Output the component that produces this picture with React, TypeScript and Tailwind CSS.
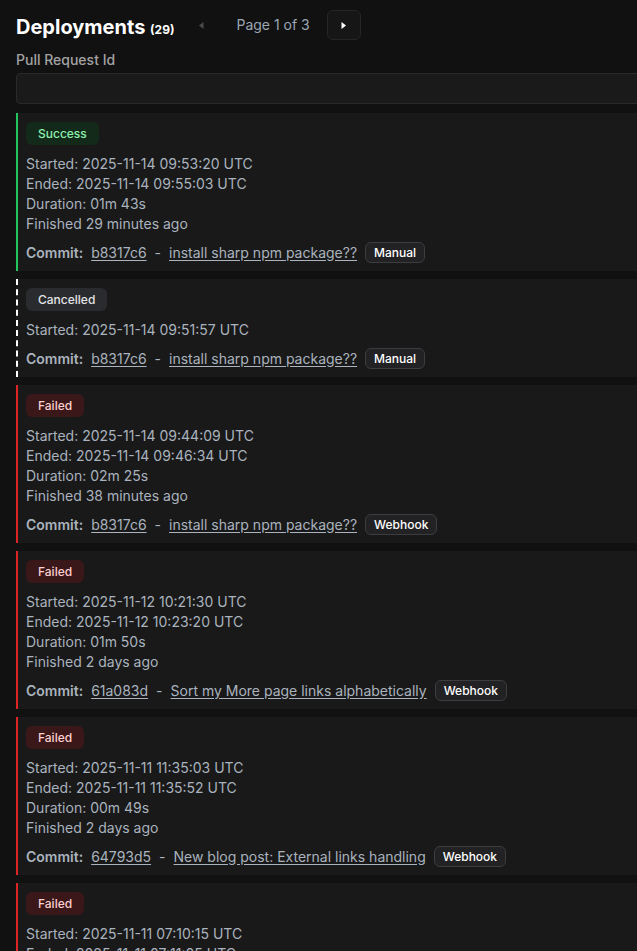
import React from 'react';

type Status = 'Success' | 'Cancelled' | 'Failed';

interface Deployment {
  status: Status;
  started: string;
  ended?: string;
  duration?: string;
  finished?: string;
  sha: string;
  message: string;
  trigger: string;
}

const deployments: Deployment[] = [
  {
    status: 'Success',
    started: '2025-11-14 09:53:20 UTC',
    ended: '2025-11-14 09:55:03 UTC',
    duration: '01m 43s',
    finished: '29 minutes ago',
    sha: 'b8317c6',
    message: 'install sharp npm package??',
    trigger: 'Manual',
  },
  {
    status: 'Cancelled',
    started: '2025-11-14 09:51:57 UTC',
    sha: 'b8317c6',
    message: 'install sharp npm package??',
    trigger: 'Manual',
  },
  {
    status: 'Failed',
    started: '2025-11-14 09:44:09 UTC',
    ended: '2025-11-14 09:46:34 UTC',
    duration: '02m 25s',
    finished: '38 minutes ago',
    sha: 'b8317c6',
    message: 'install sharp npm package??',
    trigger: 'Webhook',
  },
  {
    status: 'Failed',
    started: '2025-11-12 10:21:30 UTC',
    ended: '2025-11-12 10:23:20 UTC',
    duration: '01m 50s',
    finished: '2 days ago',
    sha: '61a083d',
    message: 'Sort my More page links alphabetically',
    trigger: 'Webhook',
  },
  {
    status: 'Failed',
    started: '2025-11-11 11:35:03 UTC',
    ended: '2025-11-11 11:35:52 UTC',
    duration: '00m 49s',
    finished: '2 days ago',
    sha: '64793d5',
    message: 'New blog post: External links handling',
    trigger: 'Webhook',
  },
  {
    status: 'Failed',
    started: '2025-11-11 07:10:15 UTC',
    ended: '2025-11-11 07:11:05 UTC',
    duration: '00m 50s',
    finished: '3 days ago',
    sha: '64793d5',
    message: 'New blog post: External links handling',
    trigger: 'Webhook',
  },
];

const borderByStatus: Record<Status, string> = {
  Success: 'border-l-2 border-solid border-[#22c55e]',
  Cancelled: 'border-l-2 border-dashed border-white',
  Failed: 'border-l-2 border-solid border-[#dc2626]',
};

const badgeByStatus: Record<Status, string> = {
  Success: 'bg-[#132a1b] text-[#8ef0ad]',
  Cancelled: 'bg-[#2a2b2e] text-[#e4e4e7]',
  Failed: 'bg-[#3a1719] text-[#fdcfcf]',
};

function TriangleLeft({ className }: { className?: string }) {
  return (
    <svg viewBox="0 0 15 15" className={className} fill="currentColor">
      <path d="M9.5 4v7L5 7.5z" />
    </svg>
  );
}

function TriangleRight({ className }: { className?: string }) {
  return (
    <svg viewBox="0 0 15 15" className={className} fill="currentColor">
      <path d="M5.5 4v7L10 7.5z" />
    </svg>
  );
}

function DeploymentCard({ d }: { d: Deployment }) {
  return (
    <div className={`bg-[#191919] pl-2 pr-4 pt-[9px] pb-2 ${borderByStatus[d.status]}`}>
      <div
        className={`flex h-[23px] w-fit items-center rounded-md px-3 text-xs font-medium ${badgeByStatus[d.status]}`}
      >
        {d.status}
      </div>
      <div className="mt-[9px] text-sm leading-5">
        <p>Started: {d.started}</p>
        {d.ended && <p>Ended: {d.ended}</p>}
        {d.duration && <p>Duration: {d.duration}</p>}
        {d.finished && <p>Finished {d.finished}</p>}
      </div>
      <div className="mt-2 flex h-[21px] items-center gap-2 text-sm">
        <span className="font-semibold">Commit:</span>
        <a href="#" className="underline underline-offset-2">
          {d.sha}
        </a>
        <span>-</span>
        <a href="#" className="underline underline-offset-2">
          {d.message}
        </a>
        <span className="flex h-[21px] items-center rounded-md border border-[#3d3d40] bg-[#222224] px-2 text-xs font-medium text-white">
          {d.trigger}
        </span>
      </div>
    </div>
  );
}

export default function App() {
  return (
    <div
      className="min-h-screen w-full overflow-hidden bg-[#111111] text-[#aab3be]"
      style={{ fontFamily: 'Inter, "Noto Sans", sans-serif' }}
    >
      <div className="w-[760px] pl-4 pt-[10px]">
        <div className="flex h-[30px] items-center">
          <h1 className="pt-1 text-xl font-bold text-white">
            Deployments <span className="text-xs font-bold">(29)</span>
          </h1>
          <button className="ml-[10px] flex h-[30px] w-[34px] items-center justify-center rounded-md text-[#4a4a4a]" disabled>
            <TriangleLeft className="h-[15px] w-[15px]" />
          </button>
          <span className="ml-[18px] text-sm text-[#9aa6b4]">Page 1 of 3</span>
          <button className="ml-[17px] flex h-[30px] w-[34px] items-center justify-center rounded-md border border-[#262626] bg-[#161616] text-white">
            <TriangleRight className="h-[15px] w-[15px]" />
          </button>
        </div>

        <label className="mt-[10px] block text-sm font-medium leading-5 text-[#a3a3a3]">
          Pull Request Id
        </label>
        <input
          type="text"
          className="mt-[3px] block h-[31px] w-full rounded-sm border border-[#2a2a2a] bg-[#1a1a1a] px-2 text-sm text-white outline-none"
        />

        <div className="mt-[9px] flex flex-col gap-2">
          {deployments.map((d, i) => (
            <DeploymentCard key={i} d={d} />
          ))}
        </div>
      </div>
    </div>
  );
}
